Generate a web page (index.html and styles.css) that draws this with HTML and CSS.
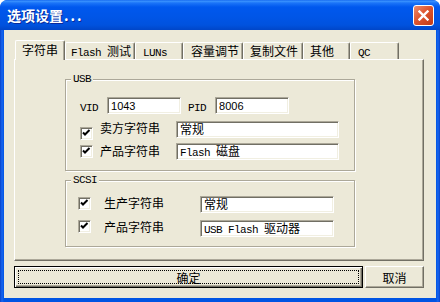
FILE: index.html
```html
<!DOCTYPE html>
<html lang="zh-CN">

<head>
  <meta charset="UTF-8">
  <title>选项设置...</title>
  <link rel="stylesheet" href="styles.css">
</head>

<body>

  <div class="window">
    <div class="titlebar">
      <span class="title">选项设置<span class="dots">...</span></span>
      <span class="close">
        <svg width="11" height="11" viewBox="0 0 11 11">
          <path d="M1.5 1.5 L9.5 9.5 M9.5 1.5 L1.5 9.5" stroke="#fff" stroke-width="2.4" stroke-linecap="square" />
        </svg>
      </span>
    </div>

    <div class="client">
      <div class="tabs">
        <div class="tab active">字符串</div>
        <div class="tab"><span class="en">Flash </span>测试</div>
        <div class="tab"><span class="en">LUNs</span></div>
        <div class="tab">容量调节</div>
        <div class="tab">复制文件</div>
        <div class="tab">其他</div>
        <div class="tab"><span class="en">QC</span></div>
      </div>

      <div class="panel">
        <div class="group usb">
          <span class="legend">USB</span>
          <div class="ids">
            <span class="en">VID</span>
            <span class="field short"><span class="num">1043</span></span>
            <span class="en pid">PID</span>
            <span class="field short"><span class="num">8006</span></span>
          </div>
          <div class="row usb-r1">
            <span class="check"><svg width="9" height="9" viewBox="0 0 9 9"><path d="M1 3.5 L3 5.5 L7.5 1" fill="none" stroke="#000" stroke-width="2" /></svg></span>
            <span class="label">卖方字符串</span>
            <span class="field wide">常规</span>
          </div>
          <div class="row usb-r2">
            <span class="check"><svg width="9" height="9" viewBox="0 0 9 9"><path d="M1 3.5 L3 5.5 L7.5 1" fill="none" stroke="#000" stroke-width="2" /></svg></span>
            <span class="label">产品字符串</span>
            <span class="field wide"><span class="en">Flash </span>磁盘</span>
          </div>
        </div>

        <div class="group scsi">
          <span class="legend">SCSI</span>
          <div class="row scsi-r1">
            <span class="check"><svg width="9" height="9" viewBox="0 0 9 9"><path d="M1 3.5 L3 5.5 L7.5 1" fill="none" stroke="#000" stroke-width="2" /></svg></span>
            <span class="label">生产字符串</span>
            <span class="field mid">常规</span>
          </div>
          <div class="row scsi-r2">
            <span class="check"><svg width="9" height="9" viewBox="0 0 9 9"><path d="M1 3.5 L3 5.5 L7.5 1" fill="none" stroke="#000" stroke-width="2" /></svg></span>
            <span class="label">产品字符串</span>
            <span class="field mid"><span class="en">USB Flash </span>驱动器</span>
          </div>
        </div>
      </div>

      <div class="actions">
        <div class="btn btn-default">确定</div>
        <div class="btn btn-cancel">取消</div>
      </div>
    </div>
  </div>

</body>

</html>
```

FILE: styles.css
```css
* {
  box-sizing: border-box;
}

body {
  margin: 0;
  background: #fff;
  font-family: "Noto Sans CJK SC", sans-serif;
  font-size: 12px;
  color: #000;
}

.window {
  width: 440px;
  height: 302px;
  display: flex;
  flex-direction: column;
  background: linear-gradient(to right, #0841C8, #1766F0 2px, #0054E3 4px, #0054E3 436px, #1766F0 438px, #0841C8);
  border-radius: 8px 8px 0 0;
}

.titlebar {
  height: 30px;
  display: flex;
  align-items: center;
  justify-content: space-between;
  padding: 0 6px 0 7px;
  border-radius: 7px 7px 0 0;
  background: linear-gradient(#0A5CEB 0, #3D95FF 1px, #1B74F8 3px, #0058EE 7px, #0055E6 18px, #0052DE 25px, #0046C8 30px);
}

.title {
  color: #fff;
  font-weight: bold;
  font-size: 14px;
  text-shadow: 1px 1px #0A2A9A;
}

.dots {
  letter-spacing: 2px;
  margin-left: 1px;
}

.close {
  width: 21px;
  height: 21px;
  margin-top: 1px;
  display: flex;
  align-items: center;
  justify-content: center;
  border: 1px solid #fff;
  border-radius: 3px;
  background: linear-gradient(135deg, #ED8C6E, #DE5630 45%, #C23A14);
}

.client {
  flex: 1;
  margin: 0 4px 4px;
  background: #ECE9D8;
  padding: 10px 12px 0 10px;
}

.en {
  font-family: "Liberation Mono", monospace;
  font-size: 11px;
  letter-spacing: -0.6px;
  white-space: pre;
}

.num {
  font-family: "Liberation Sans", sans-serif;
  font-size: 11px;
}

/* tab strip */
.tabs {
  display: flex;
  align-items: flex-end;
  height: 20px;
  padding-left: 1px;
  margin-bottom: -1px;
  position: relative;
  z-index: 1;
}

.tab {
  height: 17px;
  margin-bottom: 1px;
  padding-left: 6px;
  line-height: 15px;
  background: #ECE9D8;
  border-top: 1px solid #fff;
  border-left: 1px solid #fff;
  border-right: 1px solid #716F64;
  box-shadow: inset -1px 0 #ACA899;
  border-radius: 2px 2px 0 0;
  white-space: nowrap;
}

.tab:nth-child(1) { width: 50px; }
.tab:nth-child(2) { width: 70px; padding-left: 5px; }
.tab:nth-child(3) { width: 48px; padding-left: 7px; }
.tab:nth-child(4) { width: 60px; padding-left: 7px; }
.tab:nth-child(5) { width: 60px; }
.tab:nth-child(6) { width: 47px; }
.tab:nth-child(7) { width: 49px; padding-left: 7px; }

.tab.active {
  height: 20px;
  margin-bottom: 0;
  padding-top: 1px;
  line-height: 16px;
}

.panel {
  height: 202px;
  border: 1px solid;
  border-color: #fff #716F64 #716F64 #fff;
  box-shadow: inset -1px -1px #ACA899;
  padding: 19px 0 0 50px;
}

/* group boxes */
.group {
  position: relative;
  width: 290px;
  border: 1px solid #ACA899;
  box-shadow: inset 1px 1px #fff, 1px 1px #fff;
}

.legend {
  position: absolute;
  top: -7px;
  left: 5px;
  padding: 0 2px;
  line-height: 12px;
  background: #ECE9D8;
  font-family: "Liberation Mono", monospace;
  font-size: 11px;
  letter-spacing: -0.6px;
}

.usb {
  height: 92px;
  padding: 17px 0 0 14px;
}

.scsi {
  height: 67px;
  margin-top: 9px;
  padding: 15px 0 0 12px;
}

.ids {
  display: flex;
  align-items: flex-end;
  height: 17px;
}

.ids .en {
  line-height: 12px;
  margin-right: 9px;
}

.ids .pid {
  margin-left: 7px;
}

.field {
  display: block;
  height: 17px;
  padding-left: 3px;
  line-height: 14px;
  background: #fff;
  border: 1px solid;
  border-color: #ACA899 #fff #fff #ACA899;
  box-shadow: inset 1px 1px #716F64, inset -1px -1px #F1EFE2;
  white-space: nowrap;
}

.field.short { width: 74px; }
.field.wide { width: 163px; margin-left: 16px; }
.field.mid { width: 134px; margin-left: 36px; }

.row {
  display: flex;
  align-items: flex-start;
  height: 17px;
}

.check {
  width: 13px;
  height: 13px;
  flex: none;
  display: flex;
  align-items: center;
  justify-content: center;
  background: #fff;
  border: 1px solid;
  border-color: #ACA899 #fff #fff #ACA899;
  box-shadow: inset 1px 1px #716F64, inset -1px -1px #F1EFE2;
}

.label {
  width: 60px;
  line-height: 14px;
  white-space: nowrap;
}

.usb .label { margin-left: 7px; }
.scsi .label { margin-left: 13px; }

.usb-r1 { margin-top: 7px; }
.usb-r1 .check { margin-top: 6px; }
.usb-r2 { margin-top: 5px; }
.usb-r2 .check { margin-top: 2px; }
.usb-r2 .label { margin-top: 1px; }

.scsi-r1 .check { margin-top: 1px; }
.scsi-r2 { margin-top: 7px; }

/* dialog buttons */
.actions {
  display: flex;
  gap: 2px;
  margin-top: 5px;
}

.btn {
  height: 22px;
  display: flex;
  align-items: center;
  justify-content: center;
  background: #ECE9D8;
  border: 1px solid;
  border-color: #fff #716F64 #716F64 #fff;
  box-shadow: inset -1px -1px #ACA899;
}

.btn-default {
  position: relative;
  width: 349px;
  border-color: #000;
  box-shadow: inset 1px 1px #fff, inset -1px -1px #716F64, inset -2px -2px #ACA899;
}

.btn-default::after {
  content: "";
  position: absolute;
  inset: 3px;
  border: 1px dotted #000;
}

.btn-cancel {
  width: 59px;
}
```
